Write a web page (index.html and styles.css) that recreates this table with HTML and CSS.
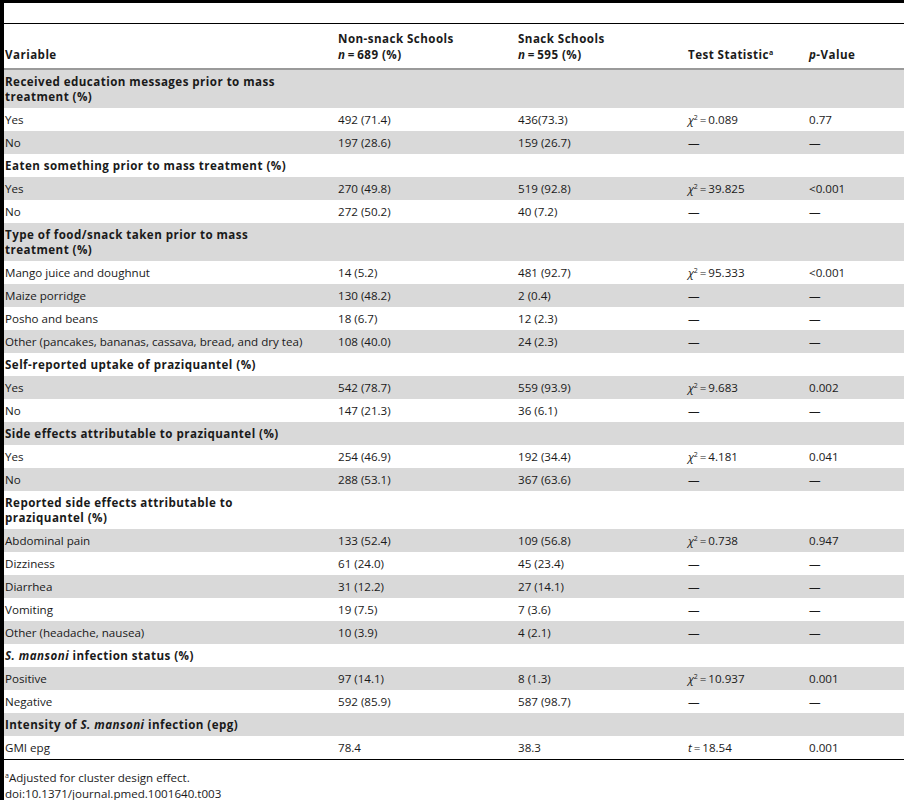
FILE: index.html
```html
<!DOCTYPE html>
<html>
<head>
<meta charset="utf-8">
<title>Table 3</title>
<link rel="stylesheet" href="styles.css">
</head>
<body>
<div class="page">
<table class="data">
  <colgroup>
    <col class="c1"><col class="c2"><col class="c3"><col class="c4"><col class="c5">
  </colgroup>
  <thead>
    <tr>
      <th>Variable</th>
      <th>Non-snack Schools<br><i>n</i>&thinsp;=&thinsp;689 (%)</th>
      <th>Snack Schools<br><i>n</i>&thinsp;=&thinsp;595 (%)</th>
      <th>Test Statistic<sup>a</sup></th>
      <th><i>p</i>-Value</th>
    </tr>
  </thead>
  <tbody>
    <tr class="grp"><td colspan="5">Received education messages prior to mass<br>treatment (%)</td></tr>
    <tr><td>Yes</td><td>492 (71.4)</td><td>436(73.3)</td><td><i>χ</i><sup>2</sup>&thinsp;=&thinsp;0.089</td><td>0.77</td></tr>
    <tr><td>No</td><td>197 (28.6)</td><td>159 (26.7)</td><td>—</td><td>—</td></tr>
    <tr class="grp"><td colspan="5">Eaten something prior to mass treatment (%)</td></tr>
    <tr><td>Yes</td><td>270 (49.8)</td><td>519 (92.8)</td><td><i>χ</i><sup>2</sup>&thinsp;=&thinsp;39.825</td><td>&lt;0.001</td></tr>
    <tr><td>No</td><td>272 (50.2)</td><td>40 (7.2)</td><td>—</td><td>—</td></tr>
    <tr class="grp"><td colspan="5">Type of food/snack taken prior to mass<br>treatment (%)</td></tr>
    <tr><td>Mango juice and doughnut</td><td>14 (5.2)</td><td>481 (92.7)</td><td><i>χ</i><sup>2</sup>&thinsp;=&thinsp;95.333</td><td>&lt;0.001</td></tr>
    <tr><td>Maize porridge</td><td>130 (48.2)</td><td>2 (0.4)</td><td>—</td><td>—</td></tr>
    <tr><td>Posho and beans</td><td>18 (6.7)</td><td>12 (2.3)</td><td>—</td><td>—</td></tr>
    <tr><td>Other (pancakes, bananas, cassava, bread, and dry tea)</td><td>108 (40.0)</td><td>24 (2.3)</td><td>—</td><td>—</td></tr>
    <tr class="grp"><td colspan="5">Self-reported uptake of praziquantel (%)</td></tr>
    <tr><td>Yes</td><td>542 (78.7)</td><td>559 (93.9)</td><td><i>χ</i><sup>2</sup>&thinsp;=&thinsp;9.683</td><td>0.002</td></tr>
    <tr><td>No</td><td>147 (21.3)</td><td>36 (6.1)</td><td>—</td><td>—</td></tr>
    <tr class="grp"><td colspan="5">Side effects attributable to praziquantel (%)</td></tr>
    <tr><td>Yes</td><td>254 (46.9)</td><td>192 (34.4)</td><td><i>χ</i><sup>2</sup>&thinsp;=&thinsp;4.181</td><td>0.041</td></tr>
    <tr><td>No</td><td>288 (53.1)</td><td>367 (63.6)</td><td>—</td><td>—</td></tr>
    <tr class="grp"><td colspan="5">Reported side effects attributable to<br>praziquantel (%)</td></tr>
    <tr><td>Abdominal pain</td><td>133 (52.4)</td><td>109 (56.8)</td><td><i>χ</i><sup>2</sup>&thinsp;=&thinsp;0.738</td><td>0.947</td></tr>
    <tr><td>Dizziness</td><td>61 (24.0)</td><td>45 (23.4)</td><td>—</td><td>—</td></tr>
    <tr><td>Diarrhea</td><td>31 (12.2)</td><td>27 (14.1)</td><td>—</td><td>—</td></tr>
    <tr><td>Vomiting</td><td>19 (7.5)</td><td>7 (3.6)</td><td>—</td><td>—</td></tr>
    <tr><td>Other (headache, nausea)</td><td>10 (3.9)</td><td>4 (2.1)</td><td>—</td><td>—</td></tr>
    <tr class="grp"><td colspan="5"><i>S. mansoni</i> infection status (%)</td></tr>
    <tr><td>Positive</td><td>97 (14.1)</td><td>8 (1.3)</td><td><i>χ</i><sup>2</sup>&thinsp;=&thinsp;10.937</td><td>0.001</td></tr>
    <tr><td>Negative</td><td>592 (85.9)</td><td>587 (98.7)</td><td>—</td><td>—</td></tr>
    <tr class="grp"><td colspan="5">Intensity of <i>S. mansoni</i> infection (epg)</td></tr>
    <tr><td>GMI epg</td><td>78.4</td><td>38.3</td><td><i>t</i>&thinsp;=&thinsp;18.54</td><td>0.001</td></tr>
  </tbody>
</table>
<div class="notes">
  <div><sup>a</sup>Adjusted for cluster design effect.</div>
  <div>doi:10.1371/journal.pmed.1001640.t003</div>
</div>
</div>
</body>
</html>
```

FILE: styles.css
```css
html, body {
  margin: 0;
  padding: 0;
  background: #fff;
}

.page {
  border-top: 3px solid #000;
  border-left: 4px solid #000;
  padding-top: 20px;
  font-family: "Open Sans", "Liberation Sans", sans-serif;
  font-size: 11.6px;
  color: #1a1a1a;
}

.data {
  width: 100%;
  border-collapse: collapse;
  table-layout: fixed;
}

.data col.c1 { width: 333px; }
.data col.c2 { width: 180px; }
.data col.c3 { width: 170px; }
.data col.c4 { width: 121px; }
.data col.c5 { width: auto; }

.data th {
  text-align: left;
  vertical-align: bottom;
  font-weight: bold;
  letter-spacing: 0.45px;
  line-height: 16px;
  padding: 7px 0 5px 1px;
  border-top: 1px solid #000;
  border-bottom: 2px solid #9a9a9a;
  white-space: nowrap;
}

.data td {
  line-height: 15px;
  padding: 4px 0 4px 1px;
  white-space: nowrap;
}

.data tbody tr:nth-child(odd) { background: #d9d9d9; }

.data tr.grp td {
  font-weight: bold;
  letter-spacing: 0.45px;
}

.data tbody tr:last-child td { border-bottom: 1px solid #000; }

sup {
  font-size: 7px;
  line-height: 0;
  vertical-align: 4px;
  letter-spacing: 0;
}

.notes {
  padding: 10px 0 0 1px;
  line-height: 16px;
}
```
